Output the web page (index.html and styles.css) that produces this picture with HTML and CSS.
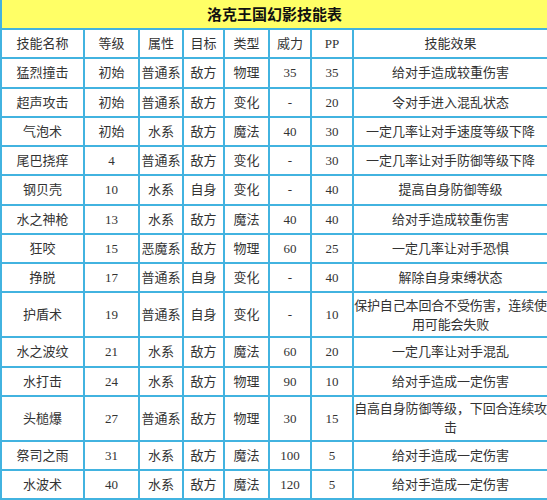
FILE: index.html
```html
<!DOCTYPE html>
<html lang="zh-CN">
<head>
<meta charset="utf-8">
<title>洛克王国幻影技能表</title>
<link rel="stylesheet" href="styles.css">
</head>
<body>
<table class="skills">
  <colgroup>
    <col class="c-name"><col class="c-lv"><col class="c-attr"><col class="c-target"><col class="c-type"><col class="c-power"><col class="c-pp"><col class="c-effect">
  </colgroup>
  <tr class="title-row"><td colspan="8" class="title">洛克王国幻影技能表</td></tr>
  <tr><td>技能名称</td><td>等级</td><td>属性</td><td>目标</td><td>类型</td><td>威力</td><td>PP</td><td>技能效果</td></tr>
  <tr><td>猛烈撞击</td><td>初始</td><td>普通系</td><td>敌方</td><td>物理</td><td>35</td><td>35</td><td>给对手造成较重伤害</td></tr>
  <tr><td>超声攻击</td><td>初始</td><td>普通系</td><td>敌方</td><td>变化</td><td>-</td><td>20</td><td>令对手进入混乱状态</td></tr>
  <tr><td>气泡术</td><td>初始</td><td>水系</td><td>敌方</td><td>魔法</td><td>40</td><td>30</td><td>一定几率让对手速度等级下降</td></tr>
  <tr><td>尾巴挠痒</td><td>4</td><td>普通系</td><td>敌方</td><td>变化</td><td>-</td><td>30</td><td>一定几率让对手防御等级下降</td></tr>
  <tr><td>钢贝壳</td><td>10</td><td>水系</td><td>自身</td><td>变化</td><td>-</td><td>40</td><td>提高自身防御等级</td></tr>
  <tr><td>水之神枪</td><td>13</td><td>水系</td><td>敌方</td><td>魔法</td><td>40</td><td>40</td><td>给对手造成较重伤害</td></tr>
  <tr><td>狂咬</td><td>15</td><td>恶魔系</td><td>敌方</td><td>物理</td><td>60</td><td>25</td><td>一定几率让对手恐惧</td></tr>
  <tr><td>挣脱</td><td>17</td><td>普通系</td><td>自身</td><td>变化</td><td>-</td><td>40</td><td>解除自身束缚状态</td></tr>
  <tr class="tall"><td>护盾术</td><td>19</td><td>普通系</td><td>自身</td><td>变化</td><td>-</td><td>10</td><td class="wrap">保护自己本回合不受伤害，连续使<br>用可能会失败</td></tr>
  <tr><td>水之波纹</td><td>21</td><td>水系</td><td>敌方</td><td>魔法</td><td>60</td><td>20</td><td>一定几率让对手混乱</td></tr>
  <tr><td>水打击</td><td>24</td><td>水系</td><td>敌方</td><td>物理</td><td>90</td><td>10</td><td>给对手造成一定伤害</td></tr>
  <tr class="tall"><td>头槌爆</td><td>27</td><td>普通系</td><td>敌方</td><td>物理</td><td>30</td><td>15</td><td class="wrap">自高自身防御等级，下回合连续攻<br>击</td></tr>
  <tr><td>祭司之雨</td><td>31</td><td>水系</td><td>敌方</td><td>魔法</td><td>100</td><td>5</td><td>给对手造成一定伤害</td></tr>
  <tr><td>水波术</td><td>40</td><td>水系</td><td>敌方</td><td>魔法</td><td>120</td><td>5</td><td>给对手造成一定伤害</td></tr>
</table>
</body>
</html>
```

FILE: styles.css
```css
html, body {
  margin: 0;
  padding: 0;
  background: #ffffff;
}

.skills {
  width: 547px;
  table-layout: fixed;
  border-collapse: collapse;
  font-family: "Liberation Serif", "Noto Sans CJK SC", serif;
  font-size: 13px;
  color: #333333;
}

.c-name { width: 83px; }
.c-lv { width: 55px; }
.c-attr { width: 44px; }
.c-target { width: 41px; }
.c-type { width: 45px; }
.c-power { width: 42px; }
.c-pp { width: 42px; }
.c-effect { width: 195px; }

.skills td {
  border: 2px solid #42b3e0;
  padding: 0;
  height: 27.25px;
  line-height: 19px;
  text-align: center;
  vertical-align: middle;
  white-space: nowrap;
  overflow: visible;
}

.skills tr.tall td {
  height: 43px;
}

.skills td.wrap {
  letter-spacing: -0.15px;
}

.skills td.title {
  border-top: none;
  height: 28px;
  background: #ffff66;
  font-family: "Noto Sans CJK SC", sans-serif;
  font-weight: bold;
  font-size: 15px;
  color: #111111;
  line-height: 20px;
}
```
